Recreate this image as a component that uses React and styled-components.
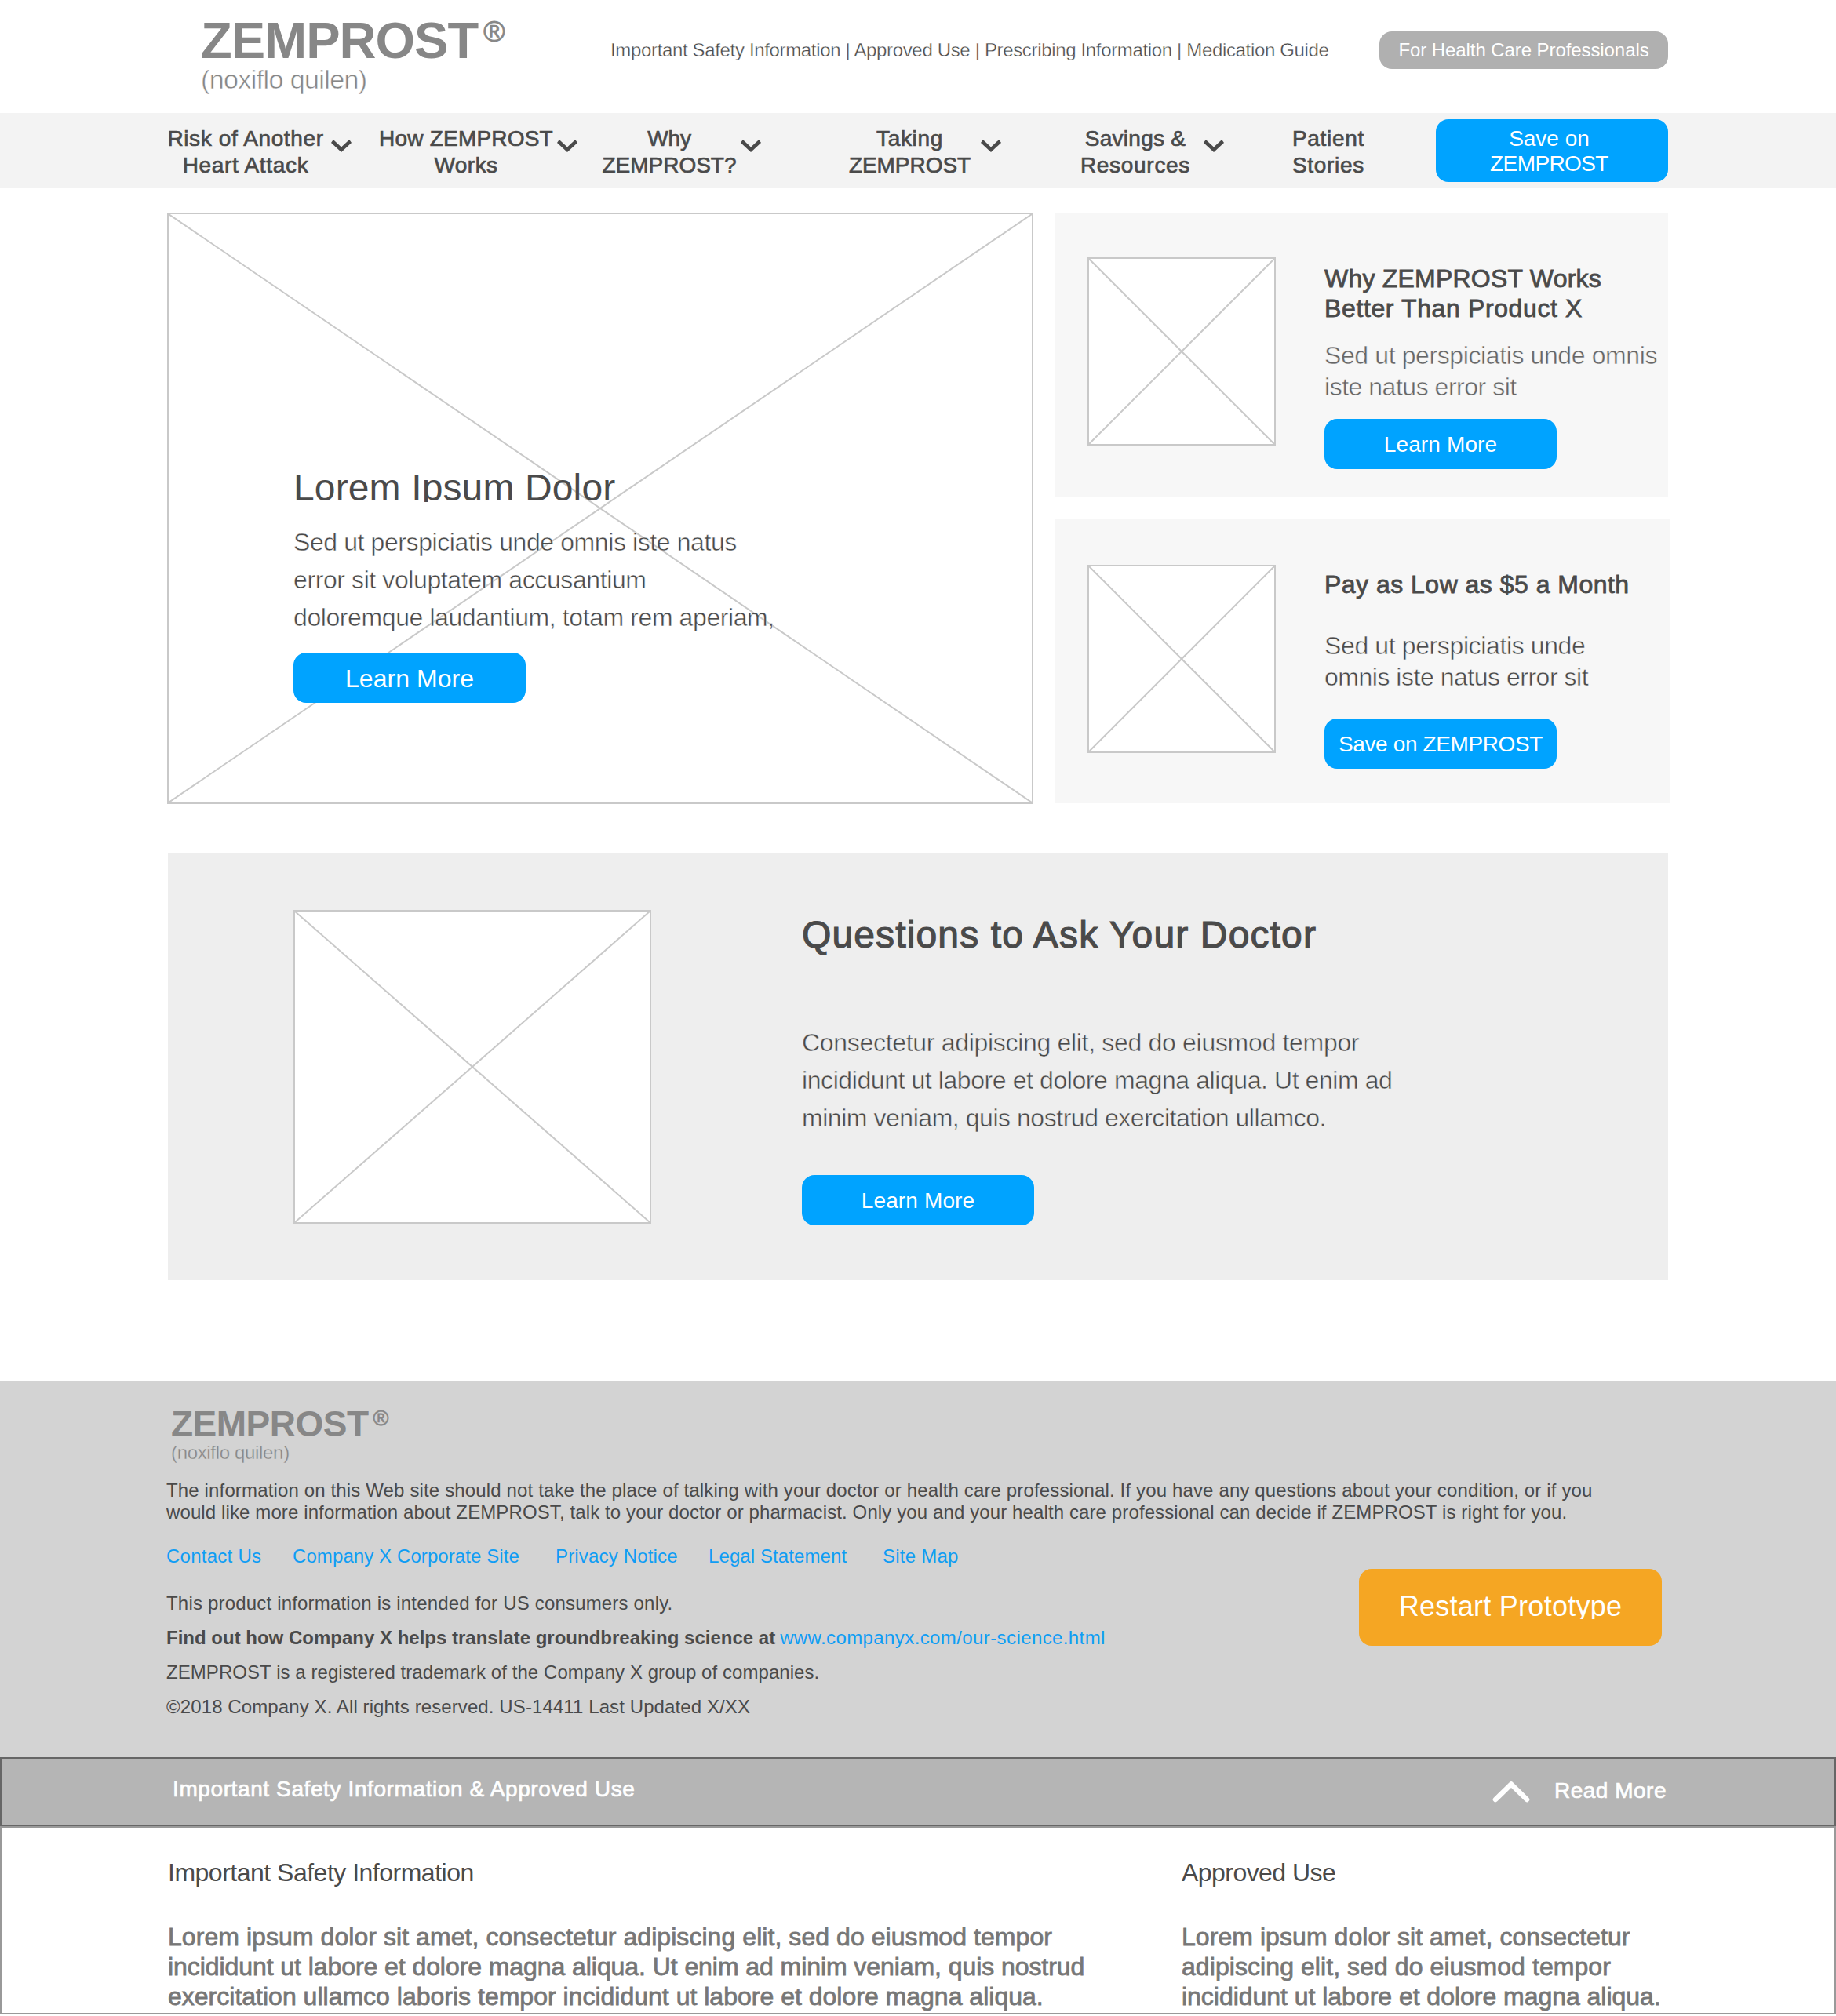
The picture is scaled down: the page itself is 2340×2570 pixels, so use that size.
import React from "react";
import styled, { createGlobalStyle, css } from "styled-components";

const color = {
  ink: "#4a4a4a",
  brand: "#878787",
  blue: "#00a3ff",
  link: "#0f9df4",
  orange: "#f5a623",
  wire: "#c9c9c9",
  nav: "#f3f3f3",
  card: "#f7f7f7",
  panel: "#eeeeee",
  footer: "#d3d3d3",
  bar: "#b5b5b5",
};

const GlobalStyle = createGlobalStyle`
  *, *::before, *::after { box-sizing: border-box; }
  body {
    margin: 0;
    background: #fff;
    color: ${color.ink};
    font-family: "Liberation Sans", Arial, sans-serif;
  }
  h1, h2, h3, p { margin: 0; font-weight: 400; }
`;

/* Light and medium weights are derived from the regular cut with a hairline stroke. */
const light = css`
  -webkit-text-stroke: 0.015em ${(p) => p.$surface || "#fff"};
`;
const medium = css`
  -webkit-text-stroke: 0.025em currentColor;
`;
const weights = { light, medium };

const Line = styled.span`
  display: block;
  white-space: nowrap;
  letter-spacing: ${(p) => p.$track || 0}px;
  ${(p) => weights[p.$weight]}
`;

const Page = styled.div`
  width: 2340px;
  height: 2570px;
  overflow: hidden;
`;

/* ---------- Brand ---------- */

const Brand = styled.div`
  color: ${color.brand};
`;

const BrandRow = styled.div`
  display: flex;
  gap: ${(p) => p.$gap}px;
`;

const Wordmark = styled.div`
  font-size: ${(p) => p.$size}px;
  line-height: ${(p) => p.$lead}px;
  letter-spacing: ${(p) => p.$track}px;
  font-weight: 700;
`;

const Registered = styled.div`
  margin-top: ${(p) => p.$top}px;
  font-size: ${(p) => p.$size}px;
  line-height: ${(p) => p.$size}px;
  ${medium}
`;

const Generic = styled.div`
  margin-top: ${(p) => p.$top}px;
  font-size: ${(p) => p.$size}px;
  line-height: ${(p) => p.$lead}px;
`;

/* ---------- Header ---------- */

const Header = styled.header`
  display: grid;
  grid-template-columns: 522px 980px 368px;
  height: 144px;
  padding-left: 256px;
`;

const HeaderBrand = styled.div`
  padding-top: 23px;
`;

const UtilityLinks = styled.div`
  padding-top: 50px;
  font-size: 24px;
  line-height: 28px;
`;

const ProButton = styled.div`
  display: flex;
  align-items: center;
  justify-content: center;
  height: 48px;
  margin-top: 40px;
  border-radius: 16px;
  background: #b0b0b0;
  color: #fff;
  font-size: 24px;
`;

/* ---------- Navigation ---------- */

const Nav = styled.nav`
  display: flex;
  height: 96px;
  padding-left: 212px;
  background: ${color.nav};
`;

const NavItem = styled.div`
  display: flex;
  gap: ${(p) => p.$gap}px;
  margin-left: ${(p) => p.$before}px;
  padding-top: 16px;
`;

const NavLabel = styled.div`
  width: ${(p) => p.$width}px;
  font-size: 28px;
  line-height: 34px;
  text-align: center;
`;

const NavChevron = styled.svg`
  width: 26px;
  height: 16px;
  margin-top: 18px;
  fill: ${color.ink};
`;

const Button = styled.div`
  display: flex;
  flex-direction: column;
  align-items: center;
  justify-content: center;
  width: 296px;
  height: ${(p) => p.$height || 64}px;
  margin: ${(p) => p.$top || 0}px 0 0 ${(p) => p.$left || 0}px;
  padding: ${(p) => p.$nudge ?? 2}px ${(p) => p.$right || 0}px 0 0;
  border-radius: 16px;
  background: ${color.blue};
  color: #fff;
  font-size: ${(p) => p.$size || 28}px;
  line-height: 32px;
`;

/* ---------- Wireframe image placeholder ---------- */

const Frame = styled.div`
  display: grid;
  width: ${(p) => p.$w}px;
  height: ${(p) => p.$h}px;
  flex: none;
  border: 2px solid ${color.wire};
  background: #fff;
`;

const Cross = styled.svg`
  grid-area: 1 / 1;
  width: ${(p) => p.$w - 4}px;
  height: ${(p) => p.$h - 4}px;
  stroke: ${color.wire};
  stroke-width: 2;
`;

function Placeholder({ w, h, children }) {
  return (
    <Frame $w={w} $h={h}>
      <Cross $w={w} $h={h} viewBox={`0 0 ${w - 4} ${h - 4}`}>
        <line x1="0" y1="0" x2={w - 4} y2={h - 4} />
        <line x1={w - 4} y1="0" x2="0" y2={h - 4} />
      </Cross>
      {children}
    </Frame>
  );
}

/* ---------- Main ---------- */

const Showcase = styled.section`
  display: flex;
  gap: 27px;
  padding: 31px 0 0 213px;
`;

const HeroCopy = styled.div`
  grid-area: 1 / 1;
  padding: 325px 0 0 159px;
`;

const HeroTitle = styled.h1`
  height: 42px;
  overflow: hidden;
  font-size: 48px;
  line-height: 48px;
`;

const Body = styled.p`
  margin: ${(p) => p.$top}px 0 0 0;
  color: ${(p) => p.$color || color.ink};
  font-size: 32px;
  line-height: ${(p) => p.$lead || 48}px;
`;

const Cards = styled.div`
  display: flex;
  flex-direction: column;
  gap: 28px;
  padding-top: 1px;
`;

const Card = styled.article`
  display: flex;
  gap: 62px;
  width: ${(p) => p.$width}px;
  height: 362px;
  padding: ${(p) => p.$pad}px 0 0 42px;
  background: ${color.card};
`;

const CardCopy = styled.div`
  margin-top: ${(p) => p.$shift}px;
`;

const CardTitle = styled.h2`
  font-size: 32px;
  line-height: 38px;
`;

const Questions = styled.section`
  display: flex;
  gap: 192px;
  width: 1912px;
  height: 544px;
  margin: 63px 0 0 214px;
  padding: 72px 0 0 160px;
  background: ${color.panel};
`;

const QuestionsTitle = styled.h2`
  margin-top: 3px;
  font-size: 48px;
  line-height: 58px;
`;

/* ---------- Footer ---------- */

const Footer = styled.footer`
  height: 480px;
  margin-top: 128px;
  padding: 33px 0 0 211px;
  background: ${color.footer};
  font-size: 24px;
  line-height: 28px;
`;

const FooterBrand = styled.div`
  margin-left: 7px;
`;

const Disclaimer = styled.p`
  margin: 20px 0 0 1px;
`;

const FooterLower = styled.div`
  display: grid;
  grid-template-columns: 1521px 386px;
  margin-top: 28px;
`;

const FooterLinks = styled.div`
  display: grid;
  grid-template-columns: 161px 335px 195px 222px auto;
  margin-left: 1px;
  color: ${color.link};
`;

const Legal = styled.div`
  display: flex;
  flex-direction: column;
  gap: 16px;
  margin: 32px 0 0 1px;
`;

const LegalRow = styled.div`
  display: flex;
  gap: 6px;
`;

const BoldLine = styled(Line)`
  font-weight: 700;
`;

const LinkLine = styled(Line)`
  color: ${color.link};
`;

const RestartButton = styled.div`
  display: flex;
  justify-content: center;
  height: 98px;
  margin-top: 30px;
  padding-top: 28px;
  border-radius: 16px;
  background: ${color.orange};
  color: #fff;
  font-size: 36px;
  line-height: 40px;
`;

const RestartLabel = styled.div`
  height: 36px;
  overflow: hidden;
`;

/* ---------- Safety drawer ---------- */

const DrawerBar = styled.div`
  display: flex;
  height: 88px;
  padding: 22px 0 0 218px;
  border: 2px solid #666;
  background: ${color.bar};
  color: #fff;
  font-size: 28px;
  line-height: 34px;
`;

const DrawerTitle = styled.div`
  width: 1682px;
`;

const ReadMore = styled.div`
  display: flex;
  gap: 31px;
  padding-top: 2px;
`;

const UpChevron = styled.svg`
  width: 48px;
  height: 28px;
  margin-top: 4px;
  fill: none;
  stroke: #fff;
  stroke-width: 6.5;
  stroke-linecap: round;
  stroke-linejoin: round;
`;

const Drawer = styled.div`
  display: grid;
  grid-template-columns: 1292px 1fr;
  height: 240px;
  padding: 38px 0 0 212px;
  border: 2px solid #999;
  background: #fff;
  font-size: 32px;
  line-height: 38px;
`;

const DrawerText = styled.div`
  margin-top: 44px;
  color: #777;
`;

/* ---------- Content ---------- */

const navItems = [
  { lines: [["Risk of Another", 0.62], ["Heart Attack", 0.68]], width: 202, before: 0, gap: 8 },
  { lines: [["How ZEMPROST", 0.2], ["Works", 0.47]], width: 224, before: 34, gap: 4 },
  { lines: [["Why", -0.1], ["ZEMPROST?", -0.02]], width: 174, before: 30, gap: 4 },
  { lines: [["Taking", 0.67], ["ZEMPROST", -0.05]], width: 159, before: 110, gap: 11 },
  { lines: [["Savings &", 0.28], ["Resources", 0.7]], width: 142, before: 100, gap: 16 },
];

const footerLinks = [
  ["Contact Us", 0.25],
  ["Company X Corporate Site", 0.09],
  ["Privacy Notice", 0.17],
  ["Legal Statement", 0.09],
  ["Site Map", 0.25],
];

function Lines({ items, ...rest }) {
  return items.map(([text, track]) => (
    <Line key={text} $track={track} {...rest}>
      {text}
    </Line>
  ));
}

export default function App() {
  return (
    <Page>
      <GlobalStyle />

      <Header>
        <HeaderBrand>
          <Brand>
            <BrandRow $gap={7}>
              <Wordmark $size={65} $lead={58} $track={-1}>ZEMPROST</Wordmark>
              <Registered $size={37} $top={-1}>®</Registered>
            </BrandRow>
            <Generic $size={34} $lead={40} $top={0}>
              <Line $weight="light" $track={-0.6}>(noxiflo quilen)</Line>
            </Generic>
          </Brand>
        </HeaderBrand>
        <UtilityLinks>
          <Line $weight="light" $track={-0.344}>
            Important Safety Information | Approved Use | Prescribing Information | Medication Guide
          </Line>
        </UtilityLinks>
        <ProButton>
          <Line $track={-0.08}>For Health Care Professionals</Line>
        </ProButton>
      </Header>

      <Nav>
        {navItems.map((item) => (
          <NavItem key={item.lines[0][0]} $before={item.before} $gap={item.gap}>
            <NavLabel $width={item.width}>
              <Lines items={item.lines} $weight="medium" />
            </NavLabel>
            <NavChevron viewBox="0 0 26 16">
              <polygon points="0,3.9 2.8,0 13,9.4 23.2,0 26,3.9 13,16" />
            </NavChevron>
          </NavItem>
        ))}
        <NavItem $before={85} $gap={0}>
          <NavLabel $width={96}>
            <Lines items={[["Patient", 0.7], ["Stories", 0.7]]} $weight="medium" />
          </NavLabel>
        </NavItem>
        <Button $height={80} $top={8} $left={89} $right={7} $nudge={1}>
          <Lines items={[["Save on", 0], ["ZEMPROST", -0.6]]} />
        </Button>
      </Nav>

      <Showcase>
        <Placeholder w={1104} h={754}>
          <HeroCopy>
            <HeroTitle>
              <Line $track={0.13}>Lorem Ipsum Dolor</Line>
            </HeroTitle>
            <Body $top={27}>
              <Lines
                $weight="light"
                items={[
                  ["Sed ut perspiciatis unde omnis iste natus", -0.409],
                  ["error sit voluptatem accusantium", -0.4],
                  ["doloremque laudantium, totam rem aperiam,", -0.41],
                ]}
              />
            </Body>
            <Button $top={21} $size={32}>
              <Line $track={0.04}>Learn More</Line>
            </Button>
          </HeroCopy>
        </Placeholder>

        <Cards>
          <Card $width={782} $pad={56}>
            <Placeholder w={240} h={240} />
            <CardCopy $shift={8}>
              <CardTitle>
                <Lines
                  $weight="medium"
                  items={[["Why ZEMPROST Works", 0.22], ["Better Than Product X", 0.62]]}
                />
              </CardTitle>
              <Body $top={21} $lead={40} $color="#666">
                <Lines
                  $weight="light"
                  $surface={color.card}
                  items={[["Sed ut perspiciatis unde omnis", -0.39], ["iste natus error sit", -0.48]]}
                />
              </Body>
              <Button $top={21}>
                <Line $track={0.13}>Learn More</Line>
              </Button>
            </CardCopy>
          </Card>

          <Card $width={784} $pad={58}>
            <Placeholder w={240} h={240} />
            <CardCopy $shift={6}>
              <CardTitle>
                <Line $weight="medium" $track={0.48}>Pay as Low as $5 a Month</Line>
              </CardTitle>
              <Body $top={39} $lead={40}>
                <Lines
                  $weight="light"
                  $surface={color.card}
                  items={[["Sed ut perspiciatis unde", -0.38], ["omnis iste natus error sit", -0.48]]}
                />
              </Body>
              <Button $top={33}>
                <Line $track={-0.38}>Save on ZEMPROST</Line>
              </Button>
            </CardCopy>
          </Card>
        </Cards>
      </Showcase>

      <Questions>
        <Placeholder w={456} h={400} />
        <div>
          <QuestionsTitle>
            <Line $weight="medium" $track={1.13}>Questions to Ask Your Doctor</Line>
          </QuestionsTitle>
          <Body $top={84}>
            <Lines
              $weight="light"
              $surface={color.panel}
              items={[
                ["Consectetur adipiscing elit, sed do eiusmod tempor", -0.31],
                ["incididunt ut labore et dolore magna aliqua. Ut enim ad", -0.42],
                ["minim veniam, quis nostrud exercitation ullamco.", -0.46],
              ]}
            />
          </Body>
          <Button $top={49}>
            <Line $track={0.13}>Learn More</Line>
          </Button>
        </div>
      </Questions>

      <Footer>
        <FooterBrand>
          <Brand>
            <BrandRow $gap={6}>
              <Wordmark $size={46} $lead={45} $track={-0.5}>ZEMPROST</Wordmark>
              <Registered $size={27} $top={2}>®</Registered>
            </BrandRow>
            <Generic $size={24} $lead={28} $top={0}>
              <Line $weight="light" $surface={color.footer} $track={-0.33}>(noxiflo quilen)</Line>
            </Generic>
          </Brand>
        </FooterBrand>
        <Disclaimer>
          <Line $track={0.144}>
            The information on this Web site should not take the place of talking with your doctor or health care professional. If you have any questions about your condition, or if you
          </Line>
          <Line $track={0.113}>
            would like more information about ZEMPROST, talk to your doctor or pharmacist. Only you and your health care professional can decide if ZEMPROST is right for you.
          </Line>
        </Disclaimer>
        <FooterLower>
          <div>
            <FooterLinks>
              <Lines items={footerLinks} />
            </FooterLinks>
            <Legal>
              <Line $track={0.185}>This product information is intended for US consumers only.</Line>
              <LegalRow>
                <BoldLine $track={0}>
                  Find out how Company X helps translate groundbreaking science at
                </BoldLine>
                <LinkLine $track={0.4}>www.companyx.com/our-science.html</LinkLine>
              </LegalRow>
              <Line $track={0.062}>
                ZEMPROST is a registered trademark of the Company X group of companies.
              </Line>
              <Line $track={0.1}>
                ©2018 Company X. All rights reserved. US-14411 Last Updated X/XX
              </Line>
            </Legal>
          </div>
          <RestartButton>
            <RestartLabel>
              <Line $track={0.26}>Restart Prototype</Line>
            </RestartLabel>
          </RestartButton>
        </FooterLower>
      </Footer>

      <DrawerBar>
        <DrawerTitle>
          <Line $weight="medium" $track={0.605}>Important Safety Information &amp; Approved Use</Line>
        </DrawerTitle>
        <ReadMore>
          <UpChevron viewBox="0 0 48 28">
            <polyline points="4,24 24,4.5 44,24" />
          </UpChevron>
          <Line $weight="medium" $track={0.5}>Read More</Line>
        </ReadMore>
      </DrawerBar>
      <Drawer>
        <div>
          <Line $track={-0.5}>Important Safety Information</Line>
          <DrawerText>
            <Lines
              $weight="medium"
              items={[
                ["Lorem ipsum dolor sit amet, consectetur adipiscing elit, sed do eiusmod tempor", 0.06],
                ["incididunt ut labore et dolore magna aliqua. Ut enim ad minim veniam, quis nostrud", -0.07],
                ["exercitation ullamco laboris tempor incididunt ut labore et dolore magna aliqua.", 0.005],
              ]}
            />
          </DrawerText>
        </div>
        <div>
          <Line $track={-0.55}>Approved Use</Line>
          <DrawerText>
            <Lines
              $weight="medium"
              items={[
                ["Lorem ipsum dolor sit amet, consectetur", 0.06],
                ["adipiscing elit, sed do eiusmod tempor", 0.07],
                ["incididunt ut labore et dolore magna aliqua.", -0.03],
              ]}
            />
          </DrawerText>
        </div>
      </Drawer>
    </Page>
  );
}
